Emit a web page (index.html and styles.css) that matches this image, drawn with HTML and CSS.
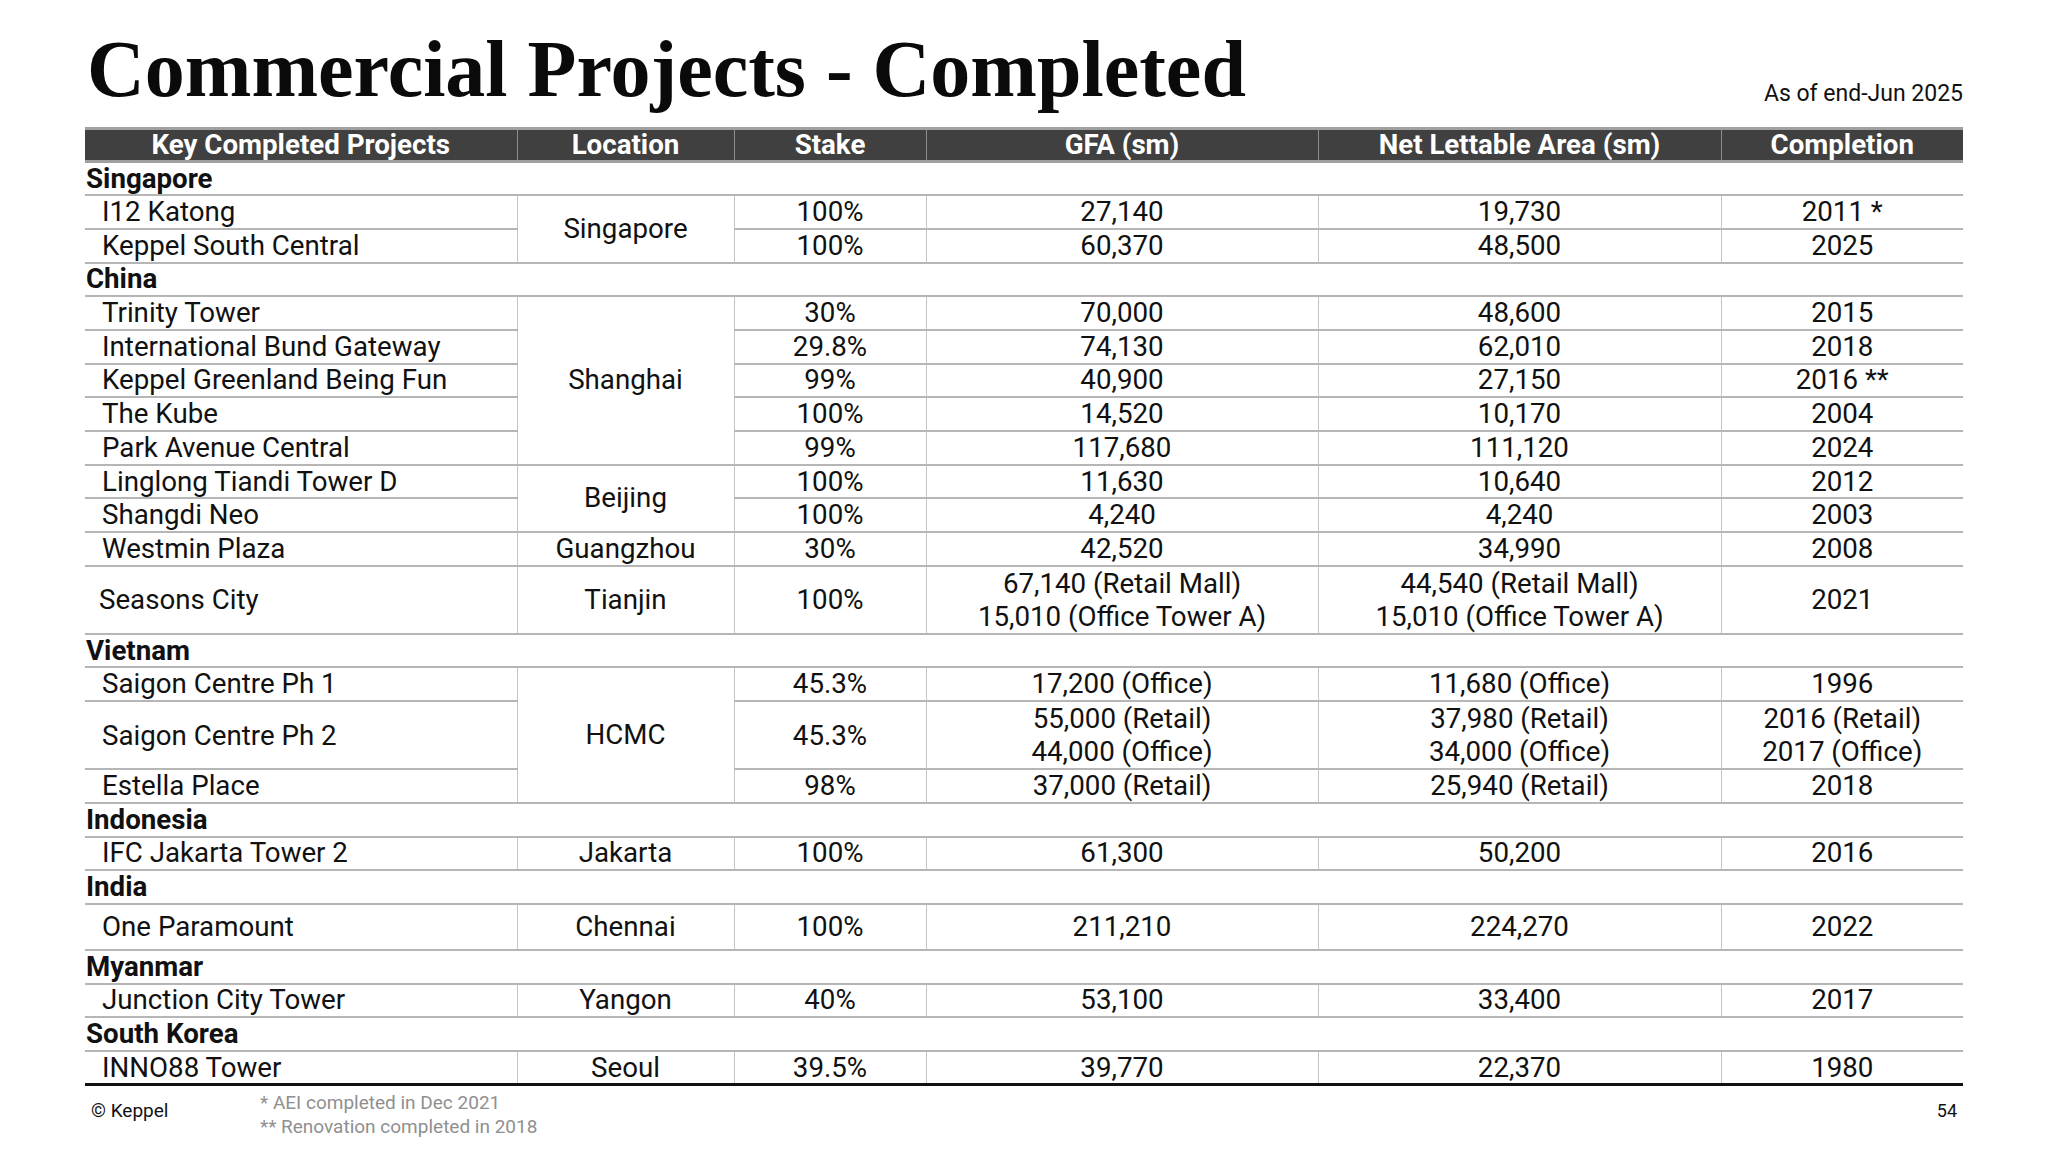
FILE: index.html
```html
<!DOCTYPE html>
<html lang="en">
<head>
<meta charset="utf-8">
<title>Commercial Projects - Completed</title>
<link rel="stylesheet" href="styles.css">
</head>
<body>
<div class="slide">
  <header class="top">
    <h1 class="title">Commercial Projects - Completed</h1>
    <div class="asof">As of end-Jun 2025</div>
  </header>
  <table class="grid">
    <colgroup>
      <col class="c-name"><col class="c-loc"><col class="c-stake"><col class="c-gfa"><col class="c-nla"><col class="c-comp">
    </colgroup>
    <thead>
      <tr class="head">
        <th>Key Completed Projects</th><th>Location</th><th>Stake</th><th>GFA (sm)</th><th>Net Lettable Area (sm)</th><th>Completion</th>
      </tr>
    </thead>
    <tbody>
      <tr class="cat"><td colspan="6">Singapore</td></tr>
      <tr><td class="name">I12 Katong</td><td rowspan="2">Singapore</td><td>100%</td><td>27,140</td><td>19,730</td><td>2011 *</td></tr>
      <tr><td class="name">Keppel South Central</td><td>100%</td><td>60,370</td><td>48,500</td><td>2025</td></tr>
      <tr class="cat"><td colspan="6">China</td></tr>
      <tr><td class="name">Trinity Tower</td><td rowspan="5">Shanghai</td><td>30%</td><td>70,000</td><td>48,600</td><td>2015</td></tr>
      <tr><td class="name">International Bund Gateway</td><td>29.8%</td><td>74,130</td><td>62,010</td><td>2018</td></tr>
      <tr><td class="name">Keppel Greenland Being Fun</td><td>99%</td><td>40,900</td><td>27,150</td><td>2016 **</td></tr>
      <tr><td class="name">The Kube</td><td>100%</td><td>14,520</td><td>10,170</td><td>2004</td></tr>
      <tr><td class="name">Park Avenue Central</td><td>99%</td><td>117,680</td><td>111,120</td><td>2024</td></tr>
      <tr><td class="name">Linglong Tiandi Tower D</td><td rowspan="2">Beijing</td><td>100%</td><td>11,630</td><td>10,640</td><td>2012</td></tr>
      <tr><td class="name">Shangdi Neo</td><td>100%</td><td>4,240</td><td>4,240</td><td>2003</td></tr>
      <tr><td class="name">Westmin Plaza</td><td>Guangzhou</td><td>30%</td><td>42,520</td><td>34,990</td><td>2008</td></tr>
      <tr class="dbl"><td class="name name-alt">Seasons City</td><td>Tianjin</td><td>100%</td><td>67,140 (Retail Mall)<br>15,010 (Office Tower A)</td><td>44,540 (Retail Mall)<br>15,010 (Office Tower A)</td><td>2021</td></tr>
      <tr class="cat"><td colspan="6">Vietnam</td></tr>
      <tr><td class="name">Saigon Centre Ph 1</td><td rowspan="3">HCMC</td><td>45.3%</td><td>17,200 (Office)</td><td>11,680 (Office)</td><td>1996</td></tr>
      <tr class="dbl"><td class="name">Saigon Centre Ph 2</td><td>45.3%</td><td>55,000 (Retail)<br>44,000 (Office)</td><td>37,980 (Retail)<br>34,000 (Office)</td><td>2016 (Retail)<br>2017 (Office)</td></tr>
      <tr><td class="name">Estella Place</td><td>98%</td><td>37,000 (Retail)</td><td>25,940 (Retail)</td><td>2018</td></tr>
      <tr class="cat"><td colspan="6">Indonesia</td></tr>
      <tr><td class="name">IFC Jakarta Tower 2</td><td>Jakarta</td><td>100%</td><td>61,300</td><td>50,200</td><td>2016</td></tr>
      <tr class="cat"><td colspan="6">India</td></tr>
      <tr class="tall"><td class="name">One Paramount</td><td>Chennai</td><td>100%</td><td>211,210</td><td>224,270</td><td>2022</td></tr>
      <tr class="cat"><td colspan="6">Myanmar</td></tr>
      <tr><td class="name">Junction City Tower</td><td>Yangon</td><td>40%</td><td>53,100</td><td>33,400</td><td>2017</td></tr>
      <tr class="cat"><td colspan="6">South Korea</td></tr>
      <tr class="last"><td class="name">INNO88 Tower</td><td>Seoul</td><td>39.5%</td><td>39,770</td><td>22,370</td><td>1980</td></tr>
    </tbody>
  </table>
  <footer class="foot">
    <div class="copy">© Keppel</div>
    <div class="notes">
      <div>* AEI completed in Dec 2021</div>
      <div>** Renovation completed in 2018</div>
    </div>
    <div class="page">54</div>
  </footer>
</div>
</body>
</html>
```
FILE: styles.css
```css
html, body {
  margin: 0;
  padding: 0;
  background: #ffffff;
}

.slide {
  width: 2048px;
  height: 1152px;
  box-sizing: border-box;
  padding: 0 85px;
  font-family: Roboto, "Liberation Sans", sans-serif;
  color: #111111;
  overflow: hidden;
}

.top {
  height: 127px;
  box-sizing: border-box;
  padding-bottom: 18px;
  display: flex;
  align-items: flex-end;
  justify-content: space-between;
}

.title {
  margin: 0 0 0 2px;
  font-family: "Liberation Serif", "DejaVu Serif", serif;
  font-weight: 700;
  font-size: 80px;
  line-height: 80px;
  color: #0a0a0a;
  letter-spacing: 0;
}

.asof {
  font-size: 23px;
  line-height: 26px;
  margin-bottom: 2px;
  color: #111111;
}

.grid {
  width: 1878px;
  border-collapse: collapse;
  table-layout: fixed;
  font-size: 27.7px;
}

.c-name { width: 432px; }
.c-loc { width: 217px; }
.c-stake { width: 192px; }
.c-gfa { width: 392px; }
.c-nla { width: 403px; }
.c-comp { width: 242px; }

.grid th,
.grid td {
  padding: 0;
  text-align: center;
  vertical-align: middle;
  line-height: 30px;
  white-space: nowrap;
}

.head {
  height: 33px;
}

.head th {
  background: #404040;
  color: #ffffff;
  font-weight: 700;
  border-top: 3px solid #a0a0a0;
  border-bottom: 3px solid #a0a0a0;
  border-left: 1px solid #8c8c8c;
}

.head th:first-child {
  border-left: none;
}

.grid tbody tr {
  height: 33.7px;
}

.grid tbody td {
  border-top: 2px solid #b6b6b6;
  border-bottom: 2px solid #b6b6b6;
  border-left: 1px solid #c4c4c4;
}

.grid tbody td.name {
  border-left: none;
  text-align: left;
  padding-left: 17px;
}

.grid tbody td.name-alt {
  padding-left: 14px;
}

.grid tr.cat td {
  font-weight: 700;
  text-align: left;
  padding-left: 1px;
  border-left: none;
}

.grid tr.dbl {
  height: 66.6px;
}

.grid tr.dbl td {
  line-height: 33px;
}

.grid tr.tall {
  height: 46px;
}

.grid tr.last td {
  border-bottom: 3px solid #111111;
}

.foot {
  display: flex;
  align-items: flex-start;
  padding: 5px 6px 0 6px;
}

.copy {
  width: 169px;
  margin-top: 8px;
  font-size: 19px;
  line-height: 23.5px;
  color: #111111;
}

.notes {
  flex: 1;
  font-size: 19px;
  line-height: 23.5px;
  color: #8f8f8f;
}

.page {
  margin-top: 8px;
  font-size: 18px;
  line-height: 23.5px;
  color: #111111;
}
```
